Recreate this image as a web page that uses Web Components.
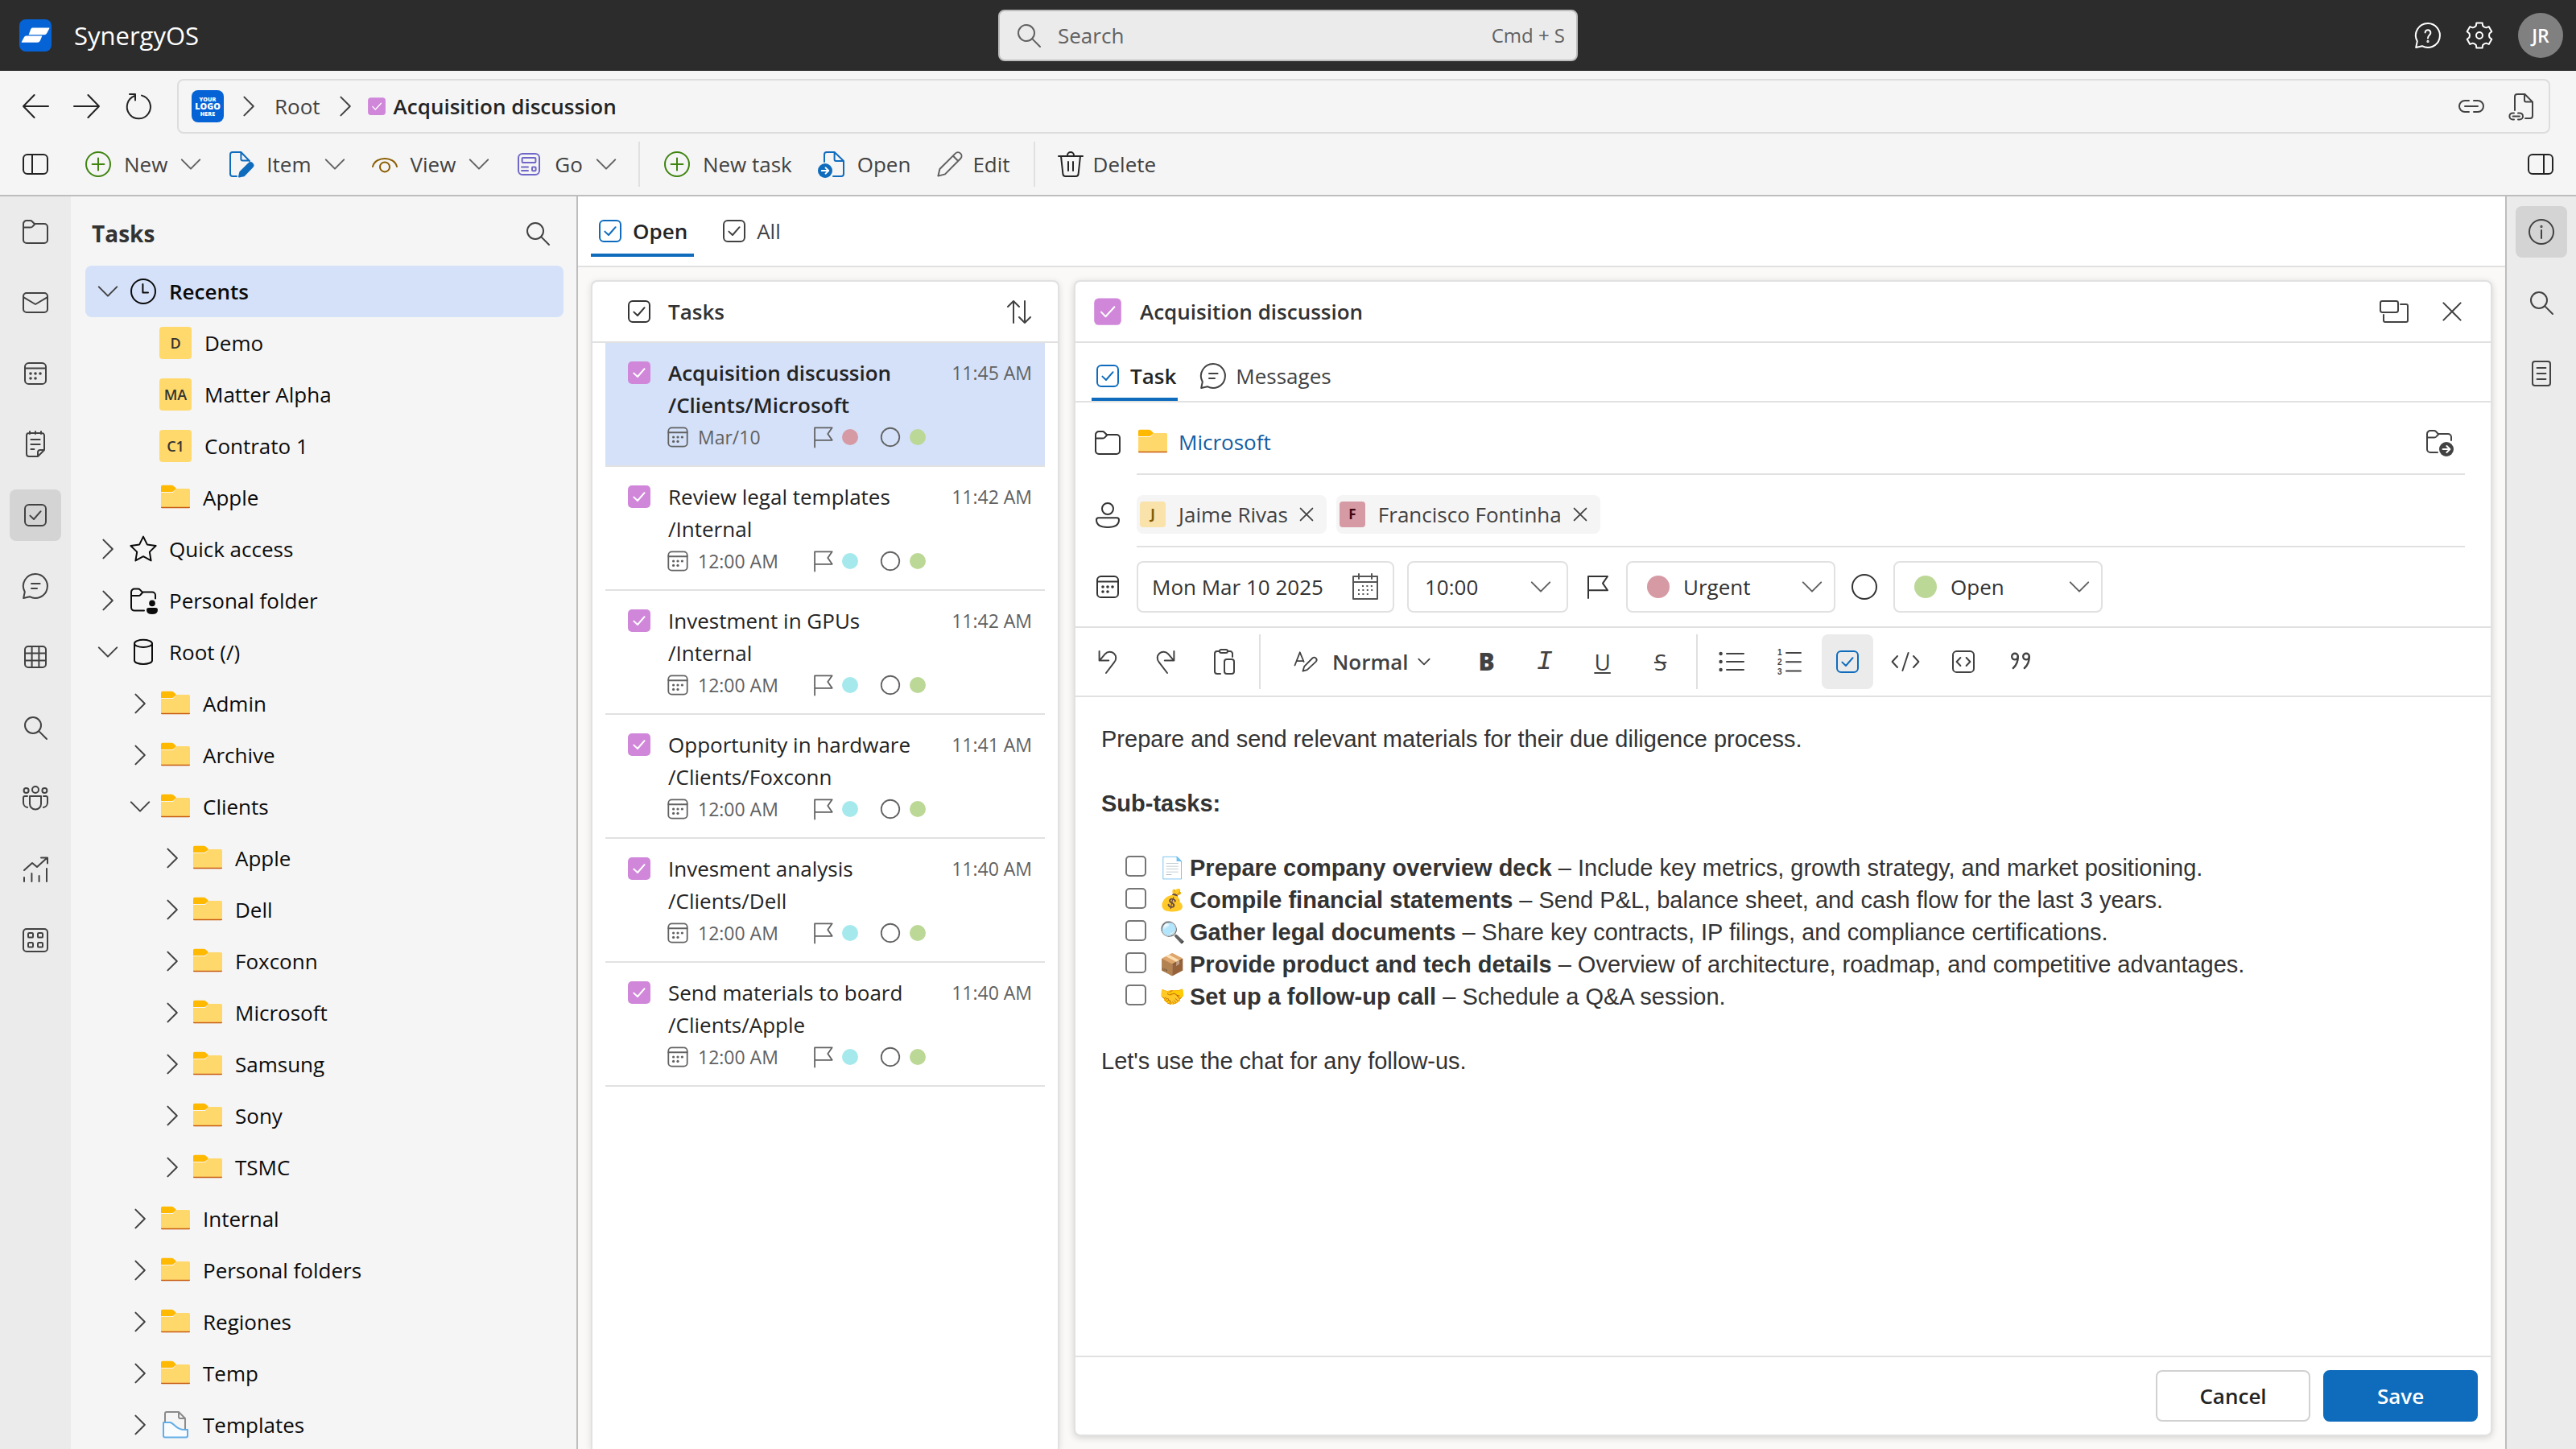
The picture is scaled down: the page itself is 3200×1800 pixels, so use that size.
<!DOCTYPE html>
<html lang="en">
<head>
<meta charset="utf-8">
<title>SynergyOS</title>
<style>
  :root {
    --font: "Open Sans", "Noto Sans", sans-serif;
    --text: #242424;
    --text-2: #424242;
    --text-3: #616161;
    --line: #e1e1e1;
    --edge: #bdbdbd;
    --accent: #0f6cbd;
    --select: #d4e1f9;
    --fs-s: 23px;
  }
  html, body { height: 100%; }
  body { margin: 0; font: 26px/40px var(--font); color: var(--text); background: #f5f5f5; overflow: hidden; }
</style>
</head>
<body>
<synergy-app></synergy-app>

<script>
/* ---------- icon set, drawn on a 20 x 20 grid ---------- */
const gear = () => {
  const pts = [];
  for (let k = 0; k < 6; k++) {
    for (const [d, r] of [[-30, 6], [-19, 6.4], [-13, 8], [13, 8], [19, 6.4]]) {
      const a = (k * 60 - 90 + d) * Math.PI / 180;
      pts.push((10 + r * Math.cos(a)).toFixed(2) + ' ' + (10 + r * Math.sin(a)).toFixed(2));
    }
  }
  return `<path d="M${pts.join('L')}Z"/><circle cx="10" cy="10" r="2"/>`;
};
const folderShape = 'M2.5 6V15a2 2 0 0 0 2 2h11a2 2 0 0 0 2-2V7a2 2 0 0 0-2-2H9.4L7.9 3.5a1.6 1.6 0 0 0-1.1-.5H4.5a2 2 0 0 0-2 2zM2.5 7.2h4.6q.6 0 1-.4l1.6-1.7';
const chat = 'M10 2.5a7.5 7.5 0 1 1-3.6 14.1L2.6 17.5l.8-3.9A7.5 7.5 0 0 1 10 2.5z';
const ICONS = {
  back: '<path d="M9.3 3 2.5 10l6.8 7M2.5 10H18"/>',
  forward: '<path d="M10.7 3l6.8 7-6.8 7M17.5 10H2"/>',
  reload: '<path d="M12 3.300A7.300 7.300 0 1 1 7.700 3.500M4.500 2.500h3.500v3.700"/>',
  right: '<path d="M7.200 4.300l5.700 5.700-5.700 5.700"/>',
  down: '<path d="M4.400 7.200l5.600 5.600 5.600-5.600"/>',
  panelLeft: '<rect x="2.500" y="4" width="15" height="12" rx="2.500"/><path d="M8 4v12"/>',
  panelRight: '<rect x="2.500" y="4" width="15" height="12" rx="2.500"/><path d="M12 4v12"/>',
  add: '<circle cx="10" cy="10" r="7.500"/><path d="M10 6.300v7.400M6.300 10h7.400"/>',
  docEdit: '<path d="M7.500 17.500H5a1.500 1.500 0 0 1-1.500-1.500V4A1.500 1.500 0 0 1 5 2.500h5.200L15.500 8M10.200 2.500v4.300q0 1 1 1h4"/><path d="M9 17.800l.7-3 5.300-5.200a1.500 1.500 0 0 1 2.200 2.200L12 17.100z" fill="currentColor"/>',
  eye: '<path d="M2.500 11.500C4.200 4.800 15.800 4.800 17.500 11.500"/><circle cx="10" cy="11.700" r="3"/>',
  form: '<rect x="3.500" y="3.500" width="13" height="13" rx="2.500"/><rect x="5.800" y="6" width="8.400" height="3" rx=".5"/><path d="M5.500 11.700h4M5.500 14h4"/><rect x="12" y="11.800" width="2.300" height="2.300" rx=".5"/>',
  docOpen: '<path d="M5.500 8.500V4A1.500 1.500 0 0 1 7 2.500h4.800L17.500 8v8a1.500 1.500 0 0 1-1.500 1.500h-5M11.800 2.500V7q0 1 1 1h4.700"/><circle cx="6" cy="14" r="4.500" fill="currentColor" stroke="none"/><path d="M3.900 14h4M6.300 12.200 8.100 14l-1.800 1.800" stroke="#fff"/>',
  pencil: '<path d="M2.700 17.300l1-4.300L13.400 3.300a2.200 2.200 0 0 1 3.200 3.200L7 16.200zM12 4.900l3 3"/>',
  trash: '<path d="M2.500 5h15M4 5l1.200 11a1.600 1.600 0 0 0 1.600 1.500h6.400a1.600 1.600 0 0 0 1.600-1.500L16 5M8 4.500a2 2 0 0 1 4 0M8.500 8.500v5.500M11.500 8.500v5.500"/>',
  search: '<circle cx="8.500" cy="8.500" r="5"/><path d="M12.200 12.200l4.800 4.800"/>',
  gear: gear(),
  help: `<path d="${chat}"/><path d="M8.300 8.200a1.700 1.700 0 1 1 2.900 1.300c-.8.8-1.200 1.100-1.200 2.200"/><circle cx="10" cy="13.700" r=".3"/>`,
  link: '<path d="M8.500 6.500H6a3.500 3.500 0 0 0 0 7h2.500M11.500 6.500H14a3.500 3.500 0 0 1 0 7h-2.500M6 10h8"/>',
  docLink: '<path d="M6 12.500V4A1.500 1.500 0 0 1 7.500 2.500h4.700L17 7.300V16a1.500 1.500 0 0 1-1.500 1.500h-3M12 2.500v3.800q0 1 1 1h4"/><path d="M5.500 14.200h-.8a2 2 0 0 0 0 4h.8M8 14.200h1a2 2 0 0 1 0 4H8M4.800 16.200h4.200"/>',
  folder: `<path d="${folderShape}"/>`,
  mail: '<rect x="2.500" y="4" width="15" height="12" rx="2"/><path d="M2.500 6.600 10 11l7.500-4.400"/>',
  calendar: '<rect x="3.500" y="3.500" width="13" height="13" rx="2.300"/><path d="M3.500 6.800h13"/><g fill="currentColor" stroke="none"><circle cx="7" cy="10" r=".9"/><circle cx="10" cy="10" r=".9"/><circle cx="13" cy="10" r=".9"/><circle cx="7" cy="13" r=".9"/><circle cx="10" cy="13" r=".9"/></g>',
  note: '<path d="M11.500 17.500H6A1.500 1.500 0 0 1 4.500 16V4.500A1.500 1.500 0 0 1 6 3h8a1.500 1.500 0 0 1 1.500 1.500v9zM11.500 17.500v-2.500a1.500 1.500 0 0 1 1.500-1.500h2.500M6.500 2v1.500M10 2v1.500M13.500 2v1.500M7.200 7h5.600M7.200 10h5.600M7.200 13h2"/>',
  check: '<rect x="3.500" y="3.500" width="13" height="13" rx="2.500"/><path d="M6.700 10.300l2.300 2.200 4.300-4.900"/>',
  checkFill: '<rect x="3" y="3" width="14" height="14" rx="2.500" fill="#d087da" stroke="none"/><path d="M6.700 10.300l2.300 2.200 4.300-4.900" stroke="#fff"/>',
  checkBig: '<rect x="1.600" y="1.800" width="16.800" height="16.600" rx="2.800" fill="#d087da" stroke="none"/><path d="M6 10.300l2.700 2.800 5.500-6" stroke="#fff"/>',
  chat: `<path d="${chat}"/><path d="M7.500 8.500h5.300M7.500 11.500h3.500"/>`,
  grid: '<rect x="3.500" y="3.500" width="13" height="13" rx="2"/><path d="M3.500 7.800h13M3.500 12.200h13M7.800 3.500v13M12.200 3.500v13"/>',
  people: '<circle cx="10" cy="4.500" r="2"/><circle cx="4.300" cy="5" r="1.500"/><circle cx="15.700" cy="5" r="1.500"/><path d="M6.500 8.500h7v4.800a3.500 3.500 0 0 1-7 0zM5 8.500H3.500a1 1 0 0 0-1 1v3a3 3 0 0 0 2.500 3M15 8.500h1.500a1 1 0 0 1 1 1v3a3 3 0 0 1-2.500 3"/>',
  chart: '<path d="M3 17.500V15M7.700 17.500v-5M12.300 17.500v-3.500M17 17.500V9.500M3 10.500l5-4.500 3 2.500 6-5.500M13.500 2.800h4v3.500"/>',
  apps: '<rect x="2.500" y="3" width="15" height="14" rx="2"/><rect x="5.500" y="5.500" width="3" height="2.800" rx=".6"/><rect x="11.500" y="5.500" width="3" height="2.800" rx=".6"/><rect x="5.500" y="11.500" width="3" height="2.800" rx=".6"/><rect x="11.500" y="11.500" width="3" height="2.800" rx=".6"/>',
  clock: '<circle cx="10" cy="10" r="7.500"/><path d="M9.700 5.500v5.200h3.300"/>',
  star: '<path d="M10 2.300l2.400 4.900 5.400.8-3.900 3.800.9 5.400-4.800-2.600-4.800 2.600.9-5.400L2.200 8l5.400-.8z"/>',
  folderPerson: '<path d="M10.500 16.300H4.500a2 2 0 0 1-2-2V4.800a2 2 0 0 1 2-2h2.300q.7 0 1.200.5L9.400 4.800h6.100a2 2 0 0 1 2 2v2M2.500 7h4.600q.6 0 1-.4l1.600-1.700"/><g fill="currentColor" stroke="none"><circle cx="15.500" cy="11.700" r="1.900"/><path d="M12 15.900q0-1.400 1.300-1.400h4.400q1.300 0 1.300 1.400 0 2.600-3.500 2.600T12 15.900z"/></g>',
  database: '<ellipse cx="10" cy="4.700" rx="5.500" ry="2.300"/><path d="M4.500 4.700v10.500c0 3 11 3 11 0V4.700"/>',
  yellow: '<g stroke="none"><path d="M1 7h7.500L10.700 4.500H18.200q.8 0 .8.800V16.500H1z" fill="#ffd86c"/><path d="M1 4V3.300q0-.9.900-.9H7.500q.7 0 1.200.4l1.400 1.200q.5.500 0 1L8.900 6q-.5.500-1.200.5H1z" fill="#ffb900"/><path d="M1 15.900h18v.1q0 .6-.6.600H1.600q-.6 0-.6-.6z" fill="#c75b12"/></g>',
  template: '<path d="M3.500 10V3a1 1 0 0 1 1-1h7.500l4 4v7M12 2v3q0 1 1 1h3" stroke="#8a8a8a"/><path d="M2.500 8.500h4c2.500 0 3.500 4.500 9 4.500h2v3.700a1 1 0 0 1-1 1h-13a1 1 0 0 1-1-1z" stroke="#62ade6" fill="#f9fcff"/>',
  sort: '<path d="M6.500 17V3.500M3 7l3.500-3.500L10 7M13.500 3.500V17M10 13.500l3.500 3.500 3.500-3.500"/>',
  popout: '<rect x="1.500" y="3.500" width="11" height="7" rx="1.200"/><path d="M14 5.500h3.500a1 1 0 0 1 1 1v9a1 1 0 0 1-1 1h-13a1 1 0 0 1-1-1V12"/>',
  close: '<path d="M4.700 4.700l10.600 10.600M15.300 4.700 4.700 15.300"/>',
  person: '<circle cx="10" cy="6" r="3.500"/><path d="M4.300 11.600h11.400q1.300 0 1.300 1.300 0 4.600-7 4.600t-7-4.600q0-1.300 1.300-1.300z"/>',
  flag: '<path d="M4.500 17V3.500h12l-3 4.300 3 4.300h-12"/>',
  circle: '<circle cx="10" cy="10" r="7.500"/>',
  month: '<rect x="2.500" y="3.500" width="15" height="14"/><path d="M2.500 7h15M6 2v3M14 2v3"/><path d="M8 9.500h7M5.500 12h9.500M5.500 14.500h7" stroke-dasharray="1 1.700" stroke-linecap="butt"/>',
  undo: '<path d="M4.800 3.500v5.800h5.800M5 9.200l3.500-4.100a3.800 3.800 0 0 1 5.600 5.200L9 17"/>',
  redo: '<path d="M15.200 3.500v5.800H9.400M15 9.200l-3.500-4.100a3.800 3.800 0 0 0-5.600 5.200L11 17"/>',
  paste: '<path d="M8 17.500H6A1.500 1.500 0 0 1 4.500 16V5A1.500 1.500 0 0 1 6 3.500h1.500M12.500 3.500H14A1.500 1.500 0 0 1 15.500 5v2"/><rect x="7.500" y="2.500" width="5" height="2" rx="1"/><rect x="10.500" y="8.500" width="6" height="9" rx="1.500"/>',
  styles: '<path d="M2.500 12.500 6 3.500l2.700 6.500M3.800 9.500h4.500M8 16.500l1-3.200 5.700-5.800a1.700 1.700 0 0 1 2.400 2.400L11 15.600z"/>',
  bullets: '<path d="M7 5h10.500M7 10h10.500M7 15h10.500"/><g fill="currentColor" stroke="none"><circle cx="3.300" cy="5" r="1.100"/><circle cx="3.300" cy="10" r="1.100"/><circle cx="3.300" cy="15" r="1.100"/></g>',
  numbered: '<path d="M8 4.500h9M8 10.100h9M8 15.700h9"/><g fill="currentColor" stroke="none" font-family="Liberation Sans" font-size="5" font-weight="700"><text x="2.500" y="6.200">1</text><text x="2.500" y="12">2</text><text x="2.500" y="17.800">3</text></g>',
  code: '<path d="M5 6.500 1.800 10 5 13.500M15 6.500l3.200 3.500-3.200 3.500M11.800 4.500 8.200 15.500"/>',
  codeBlock: '<rect x="3.500" y="3.500" width="13" height="13" rx="2.300"/><path d="M8.200 7.500 5.800 10l2.400 2.500M11.800 7.500l2.400 2.500-2.400 2.500"/>',
  quote: '<g stroke-width="1.200"><circle cx="6" cy="6.800" r="1.900"/><path d="M7.900 6.800c0 3-.8 5.400-3 7.200"/><circle cx="13" cy="6.800" r="1.900"/><path d="M14.900 6.800c0 3-.8 5.400-3 7.200"/></g>',
  info: '<circle cx="10" cy="10" r="7.500"/><path d="M10 9v5"/><circle cx="10" cy="6.700" r=".3"/>',
  page: '<rect x="4.500" y="2.500" width="11" height="15" rx="1.500"/><path d="M7.300 6.500h5.400M7.300 10h5.400M7.300 13.500h5.400"/>',
  moveFolder: '<path d="M9 16.500H4.500a2 2 0 0 1-2-2V5a2 2 0 0 1 2-2h2.300q.7 0 1.200.5L9.400 5h6.100a2 2 0 0 1 2 2v2M2.500 7.200h4.600q.6 0 1-.4l1.600-1.700"/><circle cx="14.500" cy="14.500" r="4.500" fill="currentColor" stroke="none"/><path d="M12.300 14.500h4.200M14.700 12.500l2 2-2 2" stroke="#fff"/>',
  brand: '<g stroke="none"><rect width="20" height="20" rx="4" fill="#0563d6"/><path d="M8.200 5.200H18.600q.2 0 .1.400l-1.600 3q-.5 1-1.600 1H5.800l1.300-3.500q.3-.9 1.100-.9zM4.300 10.300H14.200l-1.300 3.100q-.5 1-1.600 1H1.500q-.2 0-.1-.4l1.500-2.800q.4-.9 1.400-.9z" fill="#fff"/></g>',
  logo: '<g stroke="none"><rect width="20" height="20" rx="4" fill="#0563d6"/><g fill="#fff" text-anchor="middle" font-weight="800"><text x="10" y="6.800" font-size="3.600">YOUR</text><text x="10" y="12.200" font-size="5.400">LOGO</text><text x="10" y="16" font-size="3.600">HERE</text></g></g>'
};

/* ---------- base class ---------- */
class Base extends HTMLElement {
  connectedCallback() {
    if (this.shadowRoot) return;
    const root = this.attachShadow({ mode: 'open' });
    const t = document.createElement('template');
    t.innerHTML = `<style>*{box-sizing:border-box}button,input,select{font:inherit;color:inherit;margin:0}button{background:none;border:0;padding:0;cursor:pointer}${this.css()}</style>${this.html()}`;
    root.append(t.content.cloneNode(true));
  }
  at(name, fallback = '') { return this.getAttribute(name) ?? fallback; }
}
const define = (name, css, html) => customElements.define(name, class extends Base {
  css() { return typeof css === 'function' ? css(this) : css; }
  html() { return typeof html === 'function' ? html(this) : html; }
});

define('syn-icon',
  e => `:host{display:inline-block;flex:none;width:${e.at('size', '40')}px;height:${e.at('size', '40')}px}
    svg{display:block;width:100%;height:100%;overflow:visible;font-family:var(--font)}`,
  e => `<svg viewBox="0 0 20 20" fill="none" stroke="currentColor" stroke-width="${e.at('stroke', '1')}" stroke-linecap="round" stroke-linejoin="round" aria-hidden="true">${ICONS[e.at('name')]}</svg>`);

/* ---------- header ---------- */
define('app-header', `
  :host{display:grid;grid-template-columns:1fr 720px 1fr;align-items:center;height:88px;flex:none;background:#2c2c2c;color:#fff;padding:0 16px}
  .brand{display:flex;align-items:center;gap:28px;padding-left:8px;font-size:31px}
  label{display:flex;align-items:center;height:64px;padding:0 14px 0 16px;gap:16px;background:#ebebeb;border:2px solid var(--edge);border-radius:8px;color:var(--text-3)}
  input{flex:1;min-width:0;background:none;border:0;outline:0;padding:0}
  input::placeholder{color:var(--text-3);opacity:1}
  kbd{font:24px/40px var(--font)}
  .right{display:flex;justify-content:flex-end;align-items:center;gap:24px}
  button{display:flex}
  .me{width:56px;height:56px;margin-left:4px;border-radius:50%;background:#808080;font-size:23px;font-weight:600;align-items:center;justify-content:center}`, `
  <div class="brand"><syn-icon name="brand"></syn-icon><span>SynergyOS</span></div>
  <label><syn-icon name="search"></syn-icon><input type="search" placeholder="Search" aria-label="Search"><kbd>Cmd + S</kbd></label>
  <div class="right">
    <button aria-label="Help"><syn-icon name="help"></syn-icon></button>
    <button aria-label="Settings"><syn-icon name="gear"></syn-icon></button>
    <button class="me" aria-label="Account">JR</button>
  </div>`);

define('address-bar', `
  :host{display:flex;align-items:center;flex:none;padding:10px 32px 0 24px;color:var(--text-2)}
  button{display:flex}
  .go{display:flex;gap:24px;width:196px;color:var(--text)}
  nav{display:flex;align-items:center;flex:1;height:68px;border:2px solid #ddd;border-radius:8px;padding:0 14px 0 16px}
  a{color:inherit;text-decoration:none}
  .sep{margin:0 12px 0 11px}
  .here{display:flex;align-items:center;gap:8px;margin-left:-6px;font-weight:600;color:var(--text)}
  .tools{margin-left:auto;display:flex;gap:22px}`, `
  <div class="go"><button aria-label="Back"><syn-icon name="back"></syn-icon></button><button aria-label="Forward"><syn-icon name="forward"></syn-icon></button><button aria-label="Reload"><syn-icon name="reload"></syn-icon></button></div>
  <nav aria-label="Path">
    <syn-icon name="logo"></syn-icon><syn-icon class="sep" name="right"></syn-icon>
    <a href="#root">Root</a><syn-icon class="sep" name="right"></syn-icon>
    <span class="here"><syn-icon name="checkBig" size="26"></syn-icon>Acquisition discussion</span>
    <span class="tools"><button aria-label="Copy link"><syn-icon name="link"></syn-icon></button><button aria-label="Copy document link"><syn-icon name="docLink"></syn-icon></button></span>
  </nav>`);

define('tool-button', e => `
  :host{display:block}
  button{display:flex;align-items:center;gap:${e.hasAttribute('tight') ? 8 : 12}px;height:64px;color:var(--text-2)}
  .i{color:${e.at('tint', 'var(--text-2)')}}
  .c{margin-left:-3px;color:var(--text-3)}`, e => `
  <button><syn-icon class="i" name="${e.at('icon')}"></syn-icon><slot></slot>${e.hasAttribute('menu') ? '<syn-icon class="c" name="down"></syn-icon>' : ''}</button>`);

define('command-bar', `
  :host{display:flex;align-items:center;justify-content:space-between;height:78px;flex:none;padding:0 24px;border-bottom:2px solid var(--edge)}
  .main{display:flex;align-items:center;flex:1;margin-left:38px}
  .p{display:flex}
  .menus{display:flex;gap:22px}
  .acts{display:flex;gap:29px}
  i{width:2px;height:56px;background:#e0e0e0}
  .d1{margin:0 26px 0 20px}
  .d2{margin:0 24px 0 29px}`, `
  <button class="p" aria-label="Toggle left panel"><syn-icon name="panelLeft"></syn-icon></button>
  <div class="main">
    <div class="menus">
      <tool-button icon="add" tint="#3f8410" menu>New</tool-button>
      <tool-button icon="docEdit" tint="#0f6cbd" menu>Item</tool-button>
      <tool-button icon="eye" tint="#8a5d00" menu>View</tool-button>
      <tool-button icon="form" tint="#7068c8" menu>Go</tool-button>
    </div><i class="d1"></i>
    <div class="acts">
      <tool-button icon="add" tint="#3f8410">New task</tool-button>
      <tool-button icon="docOpen" tint="#0f6cbd">Open</tool-button>
      <tool-button icon="pencil" tint="#616161" tight>Edit</tool-button>
    </div><i class="d2"></i>
    <tool-button icon="trash" tint="#242424" tight>Delete</tool-button>
  </div>
  <button class="p" aria-label="Toggle right panel"><syn-icon name="panelRight"></syn-icon></button>`);

/* ---------- rails ---------- */
define('rail-button', `
  :host{display:block}
  button{display:flex;align-items:center;justify-content:center;width:64px;height:64px;border-radius:8px;color:var(--text-2)}
  :host([selected]) button{background:#d4d4d4}`,
  e => `<button aria-label="${e.at('label')}"><syn-icon name="${e.at('icon')}"></syn-icon></button>`);
define('side-rail', `
  :host{box-sizing:border-box;display:flex;flex-direction:column;align-items:center;gap:24px;width:88px;flex:none;padding-top:12px;background:#ebebeb}
  :host([end]){border-left:2px solid var(--edge)}`, '<slot></slot>');

/* ---------- folder tree ---------- */
define('tree-row', e => `
  :host{display:block}
  button{display:flex;align-items:center;width:100%;height:64px;padding-left:${8 + 40 * +e.at('level', '0')}px;border-radius:8px;color:#0b0b0b;text-align:left}
  :host([selected]) button{background:var(--select);font-weight:600}
  .t{width:40px;height:40px;color:var(--text-2);flex:none;display:flex}
  .i{display:flex;margin-left:4px;width:40px;flex:none}
  .l{margin-left:${e.hasAttribute('badge') ? 16 : e.at('level', '0') === '0' ? 12 : 14}px}
  .b{width:40px;height:40px;border-radius:4px;background:#ffd96c;color:#333;font-size:18px;font-weight:600;text-align:center}`, e => `
  <button><span class="t">${e.hasAttribute('open') ? '<syn-icon name="down"></syn-icon>' : e.hasAttribute('leaf') ? '' : '<syn-icon name="right"></syn-icon>'}</span>
  <span class="i">${e.hasAttribute('badge') ? `<span class="b">${e.at('badge')}</span>` : `<syn-icon name="${e.at('icon', 'yellow')}"></syn-icon>`}</span><span class="l"><slot></slot></span></button>`);
define('folder-tree', `
  :host{box-sizing:border-box;display:block;width:630px;flex:none;border-right:2px solid var(--edge);background:#f5f5f5;padding:0 16px 0 18px;overflow:hidden}
  header{display:flex;align-items:center;justify-content:space-between;height:86px;padding:6px 12px 0 8px}
  h2{margin:0;font-size:28px;line-height:40px;font-weight:700;color:#333}
  header button{display:flex;color:var(--text-2)}`, `
  <header><h2>Tasks</h2><button aria-label="Search folders"><syn-icon name="search"></syn-icon></button></header>
  <tree-row icon="clock" open selected>Recents</tree-row>
  <tree-row level="1" leaf badge="D">Demo</tree-row>
  <tree-row level="1" leaf badge="MA">Matter Alpha</tree-row>
  <tree-row level="1" leaf badge="C1">Contrato 1</tree-row>
  <tree-row level="1" leaf>Apple</tree-row>
  <tree-row icon="star">Quick access</tree-row>
  <tree-row icon="folderPerson">Personal folder</tree-row>
  <tree-row icon="database" open>Root (/)</tree-row>
  <tree-row level="1">Admin</tree-row>
  <tree-row level="1">Archive</tree-row>
  <tree-row level="1" open>Clients</tree-row>
  <tree-row level="2">Apple</tree-row>
  <tree-row level="2">Dell</tree-row>
  <tree-row level="2">Foxconn</tree-row>
  <tree-row level="2">Microsoft</tree-row>
  <tree-row level="2">Samsung</tree-row>
  <tree-row level="2">Sony</tree-row>
  <tree-row level="2">TSMC</tree-row>
  <tree-row level="1">Internal</tree-row>
  <tree-row level="1">Personal folders</tree-row>
  <tree-row level="1">Regiones</tree-row>
  <tree-row level="1">Temp</tree-row>
  <tree-row level="1" icon="template">Templates</tree-row>`);

/* ---------- tabs ---------- */
define('view-tab', `
  :host{display:block;height:100%}
  button{display:flex;align-items:center;gap:8px;height:100%;padding:14px 8px 0 4px;border-bottom:4px solid transparent;color:var(--text-2)}
  :host([tight]) button{padding-left:0;padding-right:2px}
  :host([selected]) button{border-color:var(--accent);font-weight:600;color:var(--text)}
  :host([selected]) syn-icon{color:var(--accent)}`,
  e => `<button role="tab"><syn-icon name="${e.at('icon')}"></syn-icon><slot></slot></button>`);

/* ---------- task list ---------- */
define('task-item', e => `
  :host{box-sizing:border-box;display:grid;grid-template-columns:40px 1fr auto;align-content:start;column-gap:16px;height:154px;padding:17px 16px 0 22px;border-bottom:2px solid var(--line)}
  :host([selected]){background:var(--select)}
  h3{margin:0;font:inherit;white-space:nowrap}
  :host([selected]) h3,:host([selected]) .p{font-weight:600}
  time{font-size:var(--fs-s);color:var(--text-3)}
  .p{grid-column:2/4}
  .m{grid-column:2/4;display:flex;align-items:center;height:40px;margin-left:-6px;font-size:var(--fs-s);color:var(--text-3)}
  .w{width:137px;margin-left:7px;white-space:nowrap}
  .dot{width:20px;height:20px;border-radius:50%;margin:0 25px 0 9px;background:#bcd896}
  .u{margin-left:6px;background:${e.hasAttribute('urgent') ? '#d69aa4' : '#a5e9ed'}}`, e => `
  <syn-icon name="checkFill"></syn-icon><h3><slot></slot></h3><time>${e.at('time')}</time>
  <span class="p">${e.at('path')}</span>
  <span class="m"><syn-icon name="calendar" size="36"></syn-icon><span class="w">${e.at('due', '12:00 AM')}</span>
  <syn-icon name="flag" size="36"></syn-icon><span class="dot u"></span><syn-icon name="circle" size="30" stroke="1.200"></syn-icon><span class="dot"></span></span>`);
define('task-list', `
  :host{box-sizing:border-box;display:block;width:582px;flex:none;background:#fff;border:2px solid var(--line);border-bottom:0;border-radius:8px 8px 0 0;box-shadow:0 2px 8px rgba(0,0,0,.12)}
  header{display:flex;align-items:center;gap:16px;height:76px;padding:0 28px 0 38px;border-bottom:2px solid var(--line);font-weight:600;color:#333}
  h2{font:inherit;margin:0}
  header button{display:flex;margin-left:auto;color:var(--text-2)}
  .l{padding:0 16px}`, `
  <header><syn-icon name="check"></syn-icon><h2>Tasks</h2><button aria-label="Sort"><syn-icon name="sort"></syn-icon></button></header>
  <div class="l">
    <task-item selected urgent time="11:45 AM" path="/Clients/Microsoft" due="Mar/10">Acquisition discussion</task-item>
    <task-item time="11:42 AM" path="/Internal">Review legal templates</task-item>
    <task-item time="11:42 AM" path="/Internal">Investment in GPUs</task-item>
    <task-item time="11:41 AM" path="/Clients/Foxconn">Opportunity in hardware</task-item>
    <task-item time="11:40 AM" path="/Clients/Dell">Invesment analysis</task-item>
    <task-item time="11:40 AM" path="/Clients/Apple">Send materials to board</task-item>
  </div>`);

/* ---------- task detail ---------- */
define('person-chip', e => `
  :host{display:flex;align-items:center;height:48px;padding:0 11px 0 4px;border-radius:8px;background:#f5f5f5;color:var(--text-2)}
  b{width:32px;height:32px;border-radius:4px;background:${e.at('bg')};color:${e.at('fg')};font-size:17px;line-height:32px;font-weight:700;text-align:center;margin-right:16px}
  button{display:flex;margin-left:9px}`,
  e => `<b>${e.at('initial')}</b><slot></slot><button aria-label="Remove"><syn-icon name="close" size="28" stroke="1.300"></syn-icon></button>`);
define('pick-list', e => `
  :host{box-sizing:border-box;display:flex;align-items:center;width:${e.at('width', '260')}px;height:64px;border:2px solid var(--line);border-radius:8px;background:#fff;padding:0 ${e.hasAttribute('dot') ? 7 : 12}px 0 ${e.hasAttribute('dot') ? 24 : 20}px;color:#333}
  .dot{width:28px;height:28px;border-radius:50%;background:${e.at('dot')};margin-right:17px;flex:none}
  select{appearance:none;border:0;background:none;outline:0;padding:0;flex:1;min-width:0;height:60px}
  syn-icon{color:var(--text-3);pointer-events:none}`,
  e => `${e.hasAttribute('dot') ? '<span class="dot"></span>' : ''}<select aria-label="${e.at('label')}"><option>${e.at('value')}</option></select><syn-icon name="down"></syn-icon>`);
define('format-button', `
  :host{display:block}
  button{display:flex;align-items:center;justify-content:center;width:64px;height:68px;border-radius:8px;color:var(--text-2)}
  :host([selected]) button{background:#ebebeb;color:var(--accent)}`,
  e => `<button aria-label="${e.at('label')}">${e.hasAttribute('icon') ? `<syn-icon name="${e.at('icon')}"></syn-icon>` : '<slot></slot>'}</button>`);
define('format-bar', `
  :host{box-sizing:border-box;display:flex;align-items:center;gap:8px;height:86px;padding:0 8px;border-bottom:2px solid var(--line)}
  i{width:2px;height:68px;background:#e0e0e0;margin:0 2px 0 4px}
  .style{display:flex;align-items:center;height:68px;padding:0 26px 0 28px;gap:15px;font-weight:600;color:var(--text-2)}
  .style .c{margin-left:-8px}
  .g{font-size:28px}
  .s{font-family:"Liberation Mono",monospace;font-style:italic;font-size:34px}
  .k{font-weight:800;font-size:30px}`, `
  <format-button icon="undo" label="Undo"></format-button>
  <format-button icon="redo" label="Redo"></format-button>
  <format-button icon="paste" label="Paste"></format-button><i></i>
  <button class="style"><syn-icon name="styles" size="36"></syn-icon><span>Normal</span><syn-icon class="c" name="down" size="24" stroke="1.500"></syn-icon></button>
  <format-button label="Bold"><span class="k">B</span></format-button>
  <format-button label="Italic"><span class="s">I</span></format-button>
  <format-button label="Underline"><u class="g">U</u></format-button>
  <format-button label="Strikethrough"><s class="g">S</s></format-button><i></i>
  <format-button icon="bullets" label="Bulleted list"></format-button>
  <format-button icon="numbered" label="Numbered list"></format-button>
  <format-button icon="check" label="Checklist" selected></format-button>
  <format-button icon="code" label="Code"></format-button>
  <format-button icon="codeBlock" label="Code block"></format-button>
  <format-button icon="quote" label="Quote"></format-button>`);
define('sub-task', `
  :host{display:block}
  label{display:flex;align-items:center;height:40px}
  input{appearance:none;width:26px;height:26px;border:2px solid #767676;border-radius:5px;background:#fff;margin:0 16px 4px 0}
  .e{width:30px;margin-right:8px;text-align:center;font-size:26px;white-space:nowrap}`,
  e => `<label><input type="checkbox"><span class="e">${e.at('emoji')}</span><span><slot></slot></span></label>`);
define('task-editor', `
  :host{display:block;flex:1;padding:32px;font:29px/40px "Liberation Sans",Arial,sans-serif;color:#333}
  p{margin:0 0 40px}
  .l{margin:0 0 40px;padding-left:30px}`, `
  <p>Prepare and send relevant materials for their due diligence process.</p>
  <p><b>Sub-tasks:</b></p>
  <div class="l">
    <sub-task emoji="📄"><b>Prepare company overview deck</b> – Include key metrics, growth strategy, and market positioning.</sub-task>
    <sub-task emoji="💰"><b>Compile financial statements</b> – Send P&amp;L, balance sheet, and cash flow for the last 3 years.</sub-task>
    <sub-task emoji="🔍"><b>Gather legal documents</b> – Share key contracts, IP filings, and compliance certifications.</sub-task>
    <sub-task emoji="📦"><b>Provide product and tech details</b> – Overview of architecture, roadmap, and competitive advantages.</sub-task>
    <sub-task emoji="🤝"><b>Set up a follow-up call</b> – Schedule a Q&amp;A session.</sub-task>
  </div>
  <p>Let's use the chat for any follow-us.</p>`);
define('task-detail', `
  :host{box-sizing:border-box;display:flex;flex-direction:column;flex:1;min-width:0;margin-bottom:16px;background:#fff;border:2px solid var(--line);border-radius:8px;box-shadow:0 2px 8px rgba(0,0,0,.16)}
  header{display:flex;align-items:center;height:76px;padding:0 28px 0 20px;border-bottom:2px solid var(--line);font-weight:600;color:#333}
  h1{font:inherit;margin:0 0 0 20px}
  header .r{display:flex;gap:32px;margin-left:auto;color:var(--text-2)}
  button{display:flex}
  .tabs{display:flex;gap:24px;height:74px;padding:0 20px;border-bottom:2px solid var(--line)}
  .row{display:flex;align-items:center;padding:10px 32px 0 20px}
  .row>syn-icon{color:#333}
  .f{flex:1;display:flex;align-items:center;height:80px;margin-left:16px;border-bottom:2px solid var(--line)}
  .f a{color:#115ea3;text-decoration:none;margin-left:12px}
  .f button{margin-left:auto;padding-right:12px;color:var(--text-2)}
  .chips{gap:12px}
  .dates{height:100px;gap:16px;padding-top:0;border-bottom:2px solid var(--line)}
  .date{display:flex;align-items:center;width:320px;height:64px;border:2px solid var(--line);border-radius:8px;padding:0 14px 0 17px;color:#333}
  .date input{flex:1;min-width:0;border:0;outline:0;background:none;padding:0}
  .date syn-icon{color:#555}
  footer{display:flex;justify-content:flex-end;gap:16px;padding:16px;border-top:2px solid var(--line)}
  footer button{width:192px;height:64px;border-radius:8px;border:2px solid #d1d1d1;align-items:center;justify-content:center;font-weight:600}
  footer .s{background:var(--accent);border-color:var(--accent);color:#fff}`, `
  <header><syn-icon name="checkBig"></syn-icon><h1>Acquisition discussion</h1>
    <span class="r"><button aria-label="Open in window"><syn-icon name="popout"></syn-icon></button><button aria-label="Close"><syn-icon name="close"></syn-icon></button></span></header>
  <div class="tabs" role="tablist"><view-tab icon="check" tight selected>Task</view-tab><view-tab icon="chat" tight>Messages</view-tab></div>
  <div class="row"><syn-icon name="folder"></syn-icon><div class="f"><syn-icon name="yellow"></syn-icon><a href="#microsoft">Microsoft</a><button aria-label="Move to folder"><syn-icon name="moveFolder"></syn-icon></button></div></div>
  <div class="row"><syn-icon name="person"></syn-icon><div class="f chips"><person-chip initial="J" bg="#fae2ab" fg="#835b00">Jaime Rivas</person-chip><person-chip initial="F" bg="#d69aa4" fg="#420610">Francisco Fontinha</person-chip></div></div>
  <div class="row dates"><syn-icon name="calendar"></syn-icon>
    <label class="date"><input type="text" value="Mon Mar 10 2025" aria-label="Due date"><syn-icon name="month"></syn-icon></label>
    <pick-list width="200" label="Time" value="10:00"></pick-list>
    <syn-icon name="flag"></syn-icon><pick-list label="Priority" value="Urgent" dot="#d69aa4"></pick-list>
    <syn-icon name="circle"></syn-icon><pick-list label="Status" value="Open" dot="#bcd896"></pick-list></div>
  <format-bar></format-bar>
  <task-editor></task-editor>
  <footer><button>Cancel</button><button class="s">Save</button></footer>`);

/* ---------- page ---------- */
define('work-area', `
  :host{display:flex;flex-direction:column;flex:1;min-width:0;background:#faf9f8}
  .tabs{display:flex;gap:26px;height:88px;flex:none;padding:0 16px 11px;background:#fff;border-bottom:2px solid var(--line)}
  .body{display:flex;flex:1;min-height:0;gap:18px;padding:16px 16px 0}`, `
  <div class="tabs" role="tablist"><view-tab icon="check" selected>Open</view-tab><view-tab icon="check">All</view-tab></div>
  <div class="body"><task-list></task-list><task-detail></task-detail></div>`);
define('synergy-app', `
  :host{display:flex;flex-direction:column;height:100vh;overflow:hidden}
  main{display:flex;flex:1;min-height:0}`, `
  <app-header></app-header><address-bar></address-bar><command-bar></command-bar>
  <main>
    <side-rail>
      <rail-button icon="folder" label="Files"></rail-button><rail-button icon="mail" label="Mail"></rail-button>
      <rail-button icon="calendar" label="Calendar"></rail-button><rail-button icon="note" label="Notes"></rail-button>
      <rail-button icon="check" label="Tasks" selected></rail-button><rail-button icon="chat" label="Chat"></rail-button>
      <rail-button icon="grid" label="Tables"></rail-button><rail-button icon="search" label="Search"></rail-button>
      <rail-button icon="people" label="People"></rail-button><rail-button icon="chart" label="Reports"></rail-button>
      <rail-button icon="apps" label="Apps"></rail-button>
    </side-rail>
    <folder-tree></folder-tree>
    <work-area></work-area>
    <side-rail end>
      <rail-button icon="info" label="Details" selected></rail-button><rail-button icon="search" label="Search"></rail-button><rail-button icon="page" label="Page"></rail-button>
    </side-rail>
  </main>`);
</script>
</body>
</html>
